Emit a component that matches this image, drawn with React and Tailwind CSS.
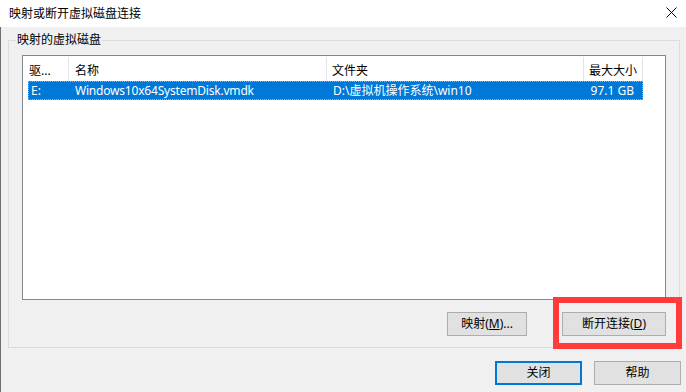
export default function App() {
  const font = { fontFamily: '"Noto Sans", "Noto Sans CJK SC", sans-serif' };
  return (
    <div className="relative w-[686px] h-[392px] overflow-hidden text-[12px] text-black bg-[#f0f0f0]" style={font}>
      {/* title bar */}
      <div className="h-[27px] bg-white flex items-center justify-between pl-[9px] pr-[9px]">
        <span className="leading-none">映射或断开虚拟磁盘连接</span>
        <svg width="11" height="11" viewBox="0 0 11 11" className="mt-[-2px]">
          <path d="M0.5 0.5 L10.5 10.5 M10.5 0.5 L0.5 10.5" stroke="#000" strokeWidth="1" />
        </svg>
      </div>
      {/* body */}
      <div className="h-[365px] border-l border-[#6f6f6f] pl-[7px] pt-[13px]">
        {/* group box */}
        <div className="relative w-[672px] h-[308px] border border-[#dcdcdc] px-[13px] pt-[14px]">
          <span className="absolute left-[7px] top-[-9px] bg-[#f0f0f0] px-[1px] leading-[16px]">映射的虚拟磁盘</span>
          {/* list view */}
          <div className="w-[644px] h-[245px] border border-[#828790] bg-white">
            <div className="flex h-[25px] items-stretch pt-[1px]">
              <div className="w-[46px] border-r border-[#e5e5e5] pl-[6px] flex items-center pt-[3px]">驱...</div>
              <div className="w-[258px] border-r border-[#e5e5e5] pl-[6px] flex items-center pt-[3px]">名称</div>
              <div className="w-[257px] border-r border-[#e5e5e5] pl-[5px] flex items-center pt-[3px]">文件夹</div>
              <div className="w-[59px] border-r border-[#e5e5e5] pl-[5px] flex items-center pt-[3px]">最大大小</div>
            </div>
            <div className="ml-[5px] w-[615px] h-[19px] bg-[#0078d7] text-white flex items-center border border-dotted border-[#ff9c2a]">
              <div className="w-[40px] pl-[2px]">E:</div>
              <div className="w-[258px] pl-[6px] tracking-[-0.2px]">Windows10x64SystemDisk.vmdk</div>
              <div className="w-[257px] pl-[6px]">D:\虚拟机操作系统\win10</div>
              <div className="w-[58px] text-right pr-[8px]">97.1 GB</div>
            </div>
          </div>
          {/* buttons */}
          <div className="flex justify-end gap-[35px] mt-[12px] w-[644px]">
            <button className="w-[80px] h-[24px] bg-[#e1e1e1] border border-[#adadad] flex items-center justify-center">
              映射(<u>M</u>)...
            </button>
            <button className="w-[104px] h-[24px] bg-[#e1e1e1] border border-[#adadad] flex items-center justify-center">
              断开连接(<u>D</u>)
            </button>
          </div>
        </div>
        {/* bottom buttons */}
        <div className="flex justify-end gap-[12px] mt-[13px] pr-[5px]">
          <button className="w-[87px] h-[24px] bg-[#e1e1e1] border-2 border-[#0078d7] flex items-center justify-center">关闭</button>
          <button className="w-[87px] h-[24px] bg-[#e1e1e1] border border-[#adadad] flex items-center justify-center">帮助</button>
        </div>
      </div>
      {/* annotation */}
      <div className="absolute left-[553px] top-[297px] w-[129px] h-[52px] border-[6px] border-[#ff3b3b]"></div>
    </div>
  );
}
